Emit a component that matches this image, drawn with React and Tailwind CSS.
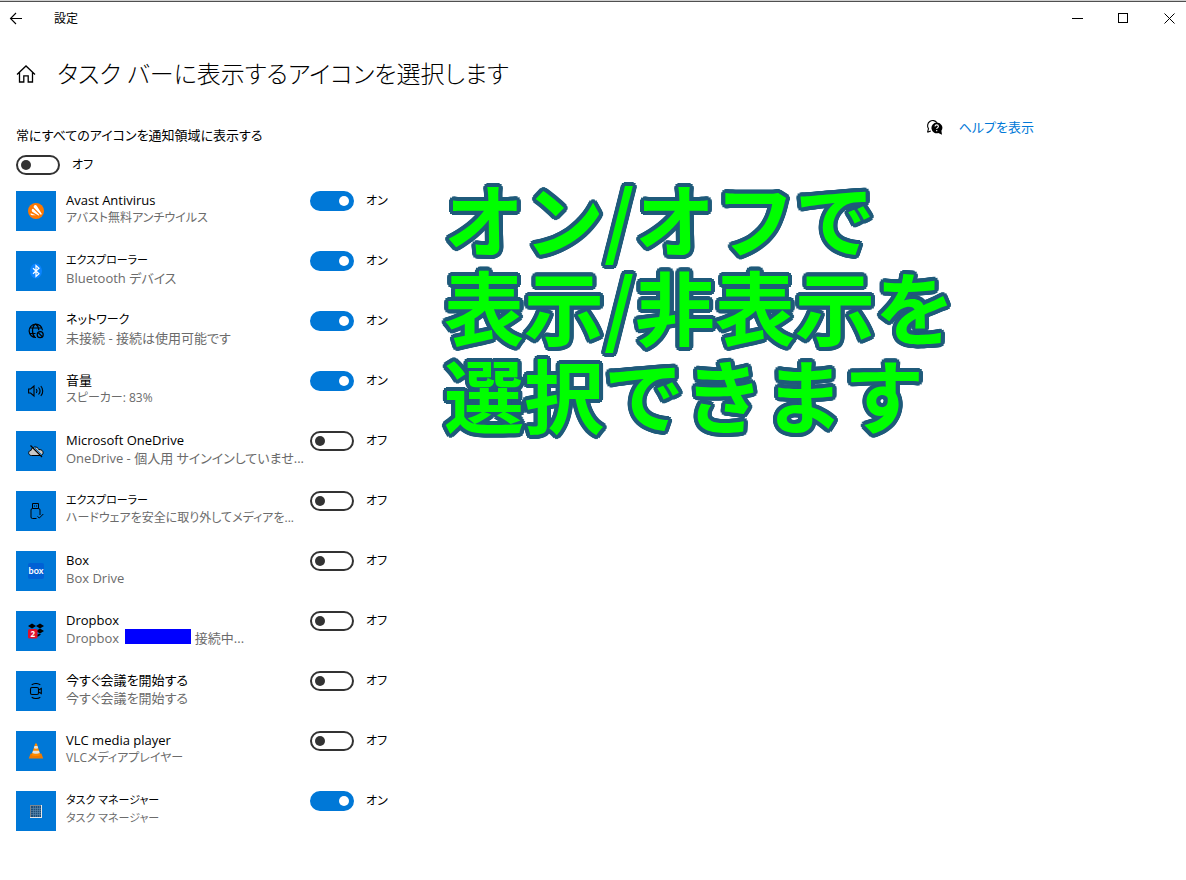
import React, { useState } from "react";

function AvastIcon() {
  return (
    <svg viewBox="0 0 16 16" className="w-4 h-4">
      <circle cx="8" cy="8" r="8" fill="#FF7800" />
      <path d="M6.300 2.400c.9-.7 1.900-.4 2.400.4l4.900 7.700c.4.8-.3 1.500-1.100 1L6.200 5c-.8-.8-.7-1.900.1-2.600z" fill="#fff" />
      <path d="M4 6.200c.3-.6 1-.7 1.500-.2l5.700 5.700c.4.500-.1 1-.7.8L4.600 9C3.600 8.400 3.600 7.200 4 6.200z" fill="#fff" />
      <path d="M2.700 10.200l5.300 2H4c-1.100 0-1.700-1-1.300-2z" fill="#fff" />
    </svg>
  );
}

function BluetoothIcon() {
  return (
    <svg viewBox="0 0 16 16" className="w-4 h-4" fill="none">
      <ellipse cx="8" cy="8" rx="6" ry="7.500" fill="#0A84FF" />
      <path d="M5 5.200l6 5.600L8 13.500v-11l3 2.700-6 5.600" stroke="#fff" strokeWidth="1.200" />
    </svg>
  );
}

function NetworkIcon() {
  return (
    <svg viewBox="0 0 16 16" className="w-4 h-4" fill="none" stroke="#000" strokeWidth="1.200">
      <path d="M8 14.500a6.700 6.700 0 1 1 6.500-7.200M7 14.500C3.600 11.500 3.600 3.500 7.500.900c2.200 1.500 3.200 3.900 3.300 6.400M1.500 5h12.200M1.500 10.500h6" />
      <circle cx="12.200" cy="11.700" r="3" />
      <path d="M10.200 9.700l4 4" />
    </svg>
  );
}

function VolumeIcon() {
  return (
    <svg viewBox="0 0 16 16" className="w-4 h-4" fill="none" stroke="#000" strokeWidth="1.100">
      <path d="M.600 6h2L6 3v10L2.600 10h-2z" />
      <path d="M8.300 6c.9 1.200.9 2.800 0 4M10.500 4.500c1.800 2 1.800 5 0 7M12.800 3c2.600 2.900 2.600 7.100 0 10" />
    </svg>
  );
}

function OneDriveIcon() {
  return (
    <svg viewBox="0 0 16 16" className="w-4 h-4">
      <path d="M3.500 12.500C1.500 12.500.500 11 .700 9.600.900 8.200 2 7.500 3 7.500 3.300 5.300 5 4 7 4c1.900 0 3.200 1 3.800 2.600 2.500-.300 4.200 1 4.300 3 0 1.800-1.200 2.900-2.800 2.900z" fill="#C8C8C8" stroke="#000" />
      <path d="M4.500 2.500l10 10" stroke="#0078D7" />
      <path d="M2.500 2.500l11.500 11.500" stroke="#000" strokeWidth="1.200" />
    </svg>
  );
}

function UsbIcon() {
  return (
    <svg viewBox="0 0 16 16" className="w-4 h-4" fill="none" stroke="#000">
      <path d="M4.500 5.500v-5h6v5" />
      <path d="M6.500 2.500v1M8.500 2.500v1" />
      <path d="M8.500 15.500h-4a1.500 1.500 0 0 1-1.500-1.500V7a1.500 1.500 0 0 1 1.500-1.500h6A1.500 1.500 0 0 1 12 7v5" />
      <path d="M9.500 13.500l1.800 1.500 4-4" />
    </svg>
  );
}

function BoxIcon() {
  return (
    <span className="w-4 h-4 rounded-[2px] bg-[#0061D5] flex items-center justify-center text-white text-[9px] leading-[16px] font-bold font-[Lato,sans-serif]">
      box
    </span>
  );
}

function DropboxIcon() {
  return (
    <svg viewBox="0 0 16 16" className="w-4 h-4">
      <path d="M4 .500L8 3 4 5.500 0 3zM12 .500L16 3l-4 2.500L8 3zM12 5.500L16 8l-4 2.500L8 8zM8.500 12l3-1.300 1.500.800-3.500 2.500z" fill="#000" />
      <rect x="0" y="6" width="9.500" height="9.500" rx="1.500" fill="#E0102B" />
      <text x="4.800" y="13.500" textAnchor="middle" fontSize="8" fontWeight="700" fontFamily="Open Sans, sans-serif" fill="#fff">2</text>
    </svg>
  );
}

function MeetIcon() {
  return (
    <svg viewBox="0 0 16 16" className="w-4 h-4" fill="none" stroke="#000" strokeWidth="1.100">
      <rect x="2.500" y="4.500" width="8" height="7" rx="1.500" />
      <path d="M10.500 7l2.800-1.500v5L10.500 9" />
      <path d="M3.700 1.800c2.500-1.500 6.100-1.500 8.600 0M3.700 14.200c2.500 1.500 6.100 1.500 8.600 0" />
    </svg>
  );
}

function VlcIcon() {
  return (
    <svg viewBox="0 0 16 16" className="w-4 h-4">
      <path d="M2.600 10.500h10.800l1.800 5H.8z" fill="#F07A00" />
      <path d="M7.200.500h1.600l3.600 11.500c-1.500 1.400-7.300 1.400-8.800 0z" fill="#FF8A00" />
      <path d="M6.500 3h3l.7 2.200c-1 .6-3.400.6-4.400 0zM5 7.800h6l.7 2.200c-1.600 1-5.800 1-7.400 0z" fill="#E4E4E4" />
    </svg>
  );
}

function TaskManagerIcon() {
  return (
    <svg viewBox="0 0 16 16" className="w-4 h-4">
      <rect x="2" y="2" width="12" height="13" fill="#E8E8E8" />
      <rect x="2" y="2" width="11" height="12" fill="#7F868C" />
      <rect x="3" y="3" width="10" height="11" fill="#1F4E79" />
      <path d="M5.500 3v11M7.500 3v11M9.500 3v11M11.500 3v11M3 5.500h10M3 7.500h10M3 9.500h10M3 11.500h10" stroke="#5E8BB0" strokeWidth=".6" />
    </svg>
  );
}

function HelpIcon() {
  return (
    <svg viewBox="0 0 17 17" className="w-[17px] h-[17px]">
      <path d="M1.500 13.300l1-3.600A5 5 0 1 1 11 3.800M1.500 13.300l3.300-1.300" fill="none" stroke="#000" strokeWidth="1.100" />
      <path d="M10.700 3.500a5.300 5.300 0 0 1 4.700 8.300l.6 4-3.700-1.700A5.400 5.400 0 1 1 10.700 3.500z" fill="#000" />
      <path d="M9 7.500c0-2.200 3.400-2.100 3.400-.1 0 1.300-1.700 1.300-1.700 2.700M10.700 11v1.200" fill="none" stroke="#fff" strokeWidth="1.100" />
    </svg>
  );
}

const items = [
  { id: "avast", icon: AvastIcon, name: "Avast Antivirus", detail: "アバスト無料アンチウイルス", detailSize: "text-[12px]", on: true },
  { id: "bluetooth", icon: BluetoothIcon, name: "エクスプローラー", nameSize: "text-[11px]", detail: "Bluetooth デバイス", on: true },
  { id: "network", icon: NetworkIcon, name: "ネットワーク", nameSize: "text-[12px]", detail: "未接続 - 接続は使用可能です", on: true },
  { id: "volume", icon: VolumeIcon, name: "音量", detail: "スピーカー: 83%", detailSize: "text-[12px]", on: true },
  { id: "onedrive", icon: OneDriveIcon, name: "Microsoft OneDrive", detail: "OneDrive - 個人用 サインインしていませ...", on: false },
  { id: "usb", icon: UsbIcon, name: "エクスプローラー", nameSize: "text-[11px]", detail: "ハードウェアを安全に取り外してメディアを...", detailSize: "text-[12px]", on: false },
  { id: "box", icon: BoxIcon, name: "Box", detail: "Box Drive", on: false },
  {
    id: "dropbox",
    icon: DropboxIcon,
    name: "Dropbox",
    detail: (
      <>
        Dropbox <span className="inline-block align-top w-[66px] h-[15px] ml-[3px] bg-[#0000FF]" /> 接続中...
      </>
    ),
    on: false,
  },
  { id: "meet", icon: MeetIcon, name: "今すぐ会議を開始する", detail: "今すぐ会議を開始する", on: false },
  { id: "vlc", icon: VlcIcon, name: "VLC media player", detail: "VLCメディアプレイヤー", detailSize: "text-[12px]", on: false },
  { id: "taskmgr", icon: TaskManagerIcon, name: "タスク マネージャー", nameSize: "text-[11px]", detail: "タスク マネージャー", detailSize: "text-[11px]", on: true },
];

function Toggle({ label, defaultOn }) {
  const [on, setOn] = useState(defaultOn);
  return (
    <label className="flex items-center gap-3 h-5 shrink-0 text-[12px] leading-[20px]">
      <input
        type="checkbox"
        role="switch"
        aria-label={label}
        checked={on}
        onChange={() => setOn(!on)}
        className="appearance-none w-11 h-5 rounded-full border-2 border-[#333333] px-[3px] flex items-center before:block before:w-[10px] before:h-[10px] before:rounded-full before:bg-[#333333] checked:justify-end checked:border-[#0078D7] checked:bg-[#0078D7] checked:before:bg-white"
      />
      <span>{on ? "オン" : "オフ"}</span>
    </label>
  );
}

export default function App() {
  return (
    <div className="relative min-h-screen bg-white text-black text-[13px] leading-[18px] border-t border-[#D0D0D0] font-['Open_Sans','Noto_Sans_CJK_JP',sans-serif] [font-feature-settings:'palt']">
      <header className="flex items-center justify-between border-t border-[#505050] h-[34px]">
        <div className="flex items-center">
          <button aria-label="戻る" className="w-8 h-8 flex items-center justify-center">
            <svg viewBox="0 0 14 14" className="w-[14px] h-[14px]" fill="none" stroke="#000" strokeWidth="1.100">
              <path d="M13 6.500H1.500M7 1L1.500 6.500 7 12" />
            </svg>
          </button>
          <span className="ml-[22px] text-[12px]">設定</span>
        </div>
        <div className="flex gap-3">
          <button aria-label="最小化" className="w-[34px] h-8 flex items-center justify-center">
            <svg viewBox="0 0 11 11" className="w-[11px] h-[11px]" stroke="#000"><path d="M0 5.500h11" /></svg>
          </button>
          <button aria-label="最大化" className="w-[34px] h-8 flex items-center justify-center">
            <svg viewBox="0 0 11 11" className="w-[11px] h-[11px]" fill="none" stroke="#000"><rect x=".5" y=".5" width="9" height="9" /></svg>
          </button>
          <button aria-label="閉じる" className="w-[34px] h-8 flex items-center justify-center">
            <svg viewBox="0 0 11 11" className="w-[11px] h-[11px]" stroke="#000"><path d="M.5.5l10 10M10.500.5l-10 10" /></svg>
          </button>
        </div>
      </header>

      <div className="flex items-center gap-[21px] h-[78px] px-4">
        <svg viewBox="0 0 20 20" className="w-5 h-5" fill="none" stroke="#000" strokeWidth="1.300">
          <path d="M1 10.500L10 2l9 8.500M3.500 8.500V18h4.300v-6.200h4.400V18h4.300V8.500" />
        </svg>
        <h1 className="text-[24px] leading-[36px] font-light whitespace-nowrap">タスク バーに表示するアイコンを選択します</h1>
      </div>

      <div className="flex items-start justify-between pl-4 pr-[152px]">
        <main className="pt-[13px] pb-10">
          <h2>常にすべてのアイコンを通知領域に表示する</h2>
          <div className="mt-[11px] mb-4">
            <Toggle label="常にすべてのアイコンを通知領域に表示する" defaultOn={false} />
          </div>
          <ul className="flex flex-col gap-5">
            {items.map(({ id, icon: Icon, name, nameSize, detail, detailSize, on }) => (
              <li key={id} className="flex items-start h-10 whitespace-nowrap">
                <div className="w-10 h-10 mr-[10px] bg-[#0078D7] flex items-center justify-center shrink-0">
                  <Icon />
                </div>
                <div className="w-[244px]">
                  <p className={nameSize}>{name}</p>
                  <p className={`text-[#6B6B6B] ${detailSize || ""}`}>{detail}</p>
                </div>
                <Toggle label={name} defaultOn={on} />
              </li>
            ))}
          </ul>
        </main>
        <a href="#help" className="flex items-center gap-4 mt-[5px] text-[#0078D7] whitespace-nowrap">
          <HelpIcon />
          ヘルプを表示
        </a>
      </div>

      {/* big note laid over the page, outlined by a ring of hard shadows */}
      <p className="absolute left-[444px] top-[171px] text-[80px] leading-[88px] font-bold whitespace-nowrap text-[#00FF00] font-['Noto_Sans_CJK_JP',sans-serif] [font-feature-settings:normal] [text-shadow:4px_0_#1F5A7A,4px_1px_#1F5A7A,3px_3px_#1F5A7A,1px_4px_#1F5A7A,0_4px_#1F5A7A,-1px_4px_#1F5A7A,-3px_3px_#1F5A7A,-4px_1px_#1F5A7A,-4px_0_#1F5A7A,-4px_-1px_#1F5A7A,-3px_-3px_#1F5A7A,-1px_-4px_#1F5A7A,0_-4px_#1F5A7A,1px_-4px_#1F5A7A,3px_-3px_#1F5A7A,4px_-1px_#1F5A7A]">
        オン/オフで
        <br />
        表示/非表示を
        <br />
        選択できます
      </p>
    </div>
  );
}
